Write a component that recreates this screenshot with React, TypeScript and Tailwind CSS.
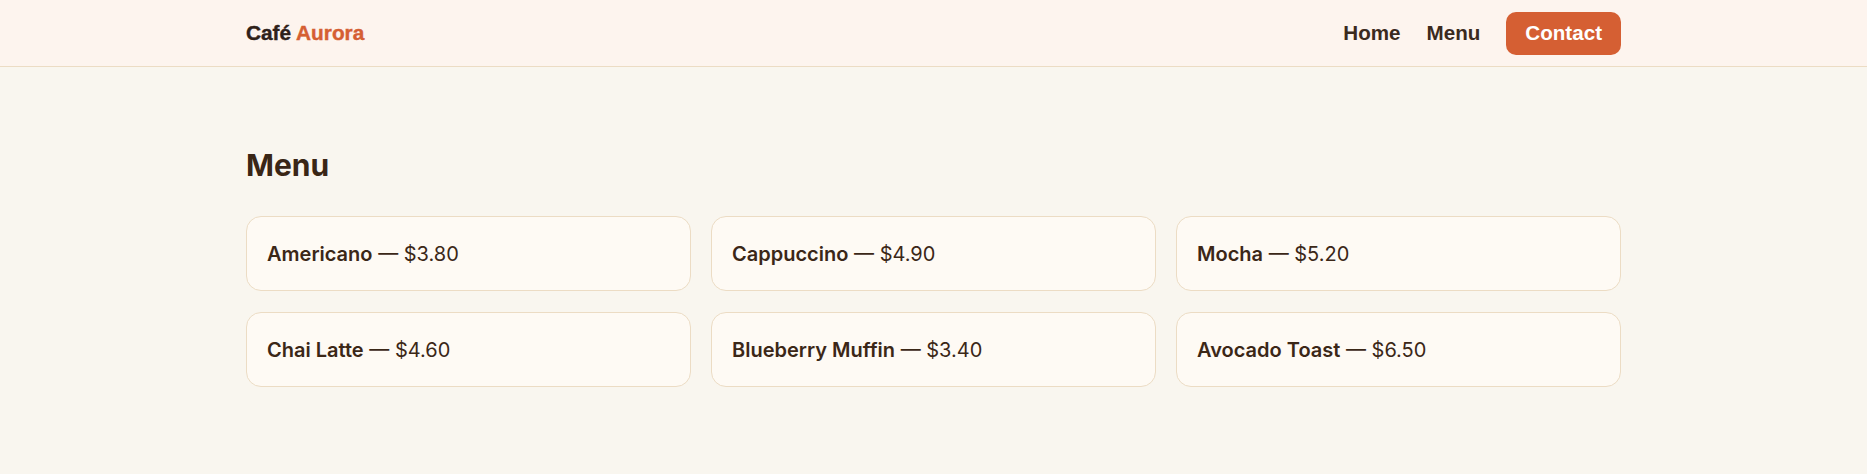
import React from "react";

const items = [
  { name: "Americano", price: "$3.80" },
  { name: "Cappuccino", price: "$4.90" },
  { name: "Mocha", price: "$5.20" },
  { name: "Chai Latte", price: "$4.60" },
  { name: "Blueberry Muffin", price: "$3.40" },
  { name: "Avocado Toast", price: "$6.50" },
];

export default function App() {
  return (
    <div className="min-h-screen bg-[#f9f6ef] text-[#3b2717]" style={{ fontFamily: "Inter, 'Noto Sans', sans-serif" }}>
      <header className="h-[67px] bg-[#fdf4ee] border-b border-[#ecdcc4]">
        <div
          className="mx-auto flex h-full w-[1375px] items-center justify-between"
          style={{ fontFamily: "'Liberation Sans', Arial, sans-serif" }}
        >
          <div className="text-[20.8px] font-bold leading-none text-[#2e2119] [-webkit-text-stroke:0.4px]">
            Café <span className="text-[#d55f33]">Aurora</span>
          </div>
          <nav className="flex items-center gap-[26px] text-[20.6px] font-bold text-[#3b2a1e]">
            <a className="leading-none">Home</a>
            <a className="leading-none">Menu</a>
            <a className="flex h-[43px] items-center rounded-[10px] bg-[#d55f33] px-[19px] leading-none text-white">
              Contact
            </a>
          </nav>
        </div>
      </header>
      <main className="mx-auto w-[1375px] pt-[80px]">
        <h1 className="mb-[33px] text-[30px] font-bold leading-[36px] text-[#3a2616]">Menu</h1>
        <div className="grid grid-cols-3 gap-x-[20px] gap-y-[21px]">
          {items.map((it) => (
            <div
              key={it.name}
              className="rounded-[15px] border border-[#ecdcc4] bg-[#fefaf4] px-5 py-[21.5px] text-[20px] leading-[30px]"
            >
              <span className="font-semibold">{it.name}</span>
              <span> — {it.price}</span>
            </div>
          ))}
        </div>
      </main>
    </div>
  );
}
